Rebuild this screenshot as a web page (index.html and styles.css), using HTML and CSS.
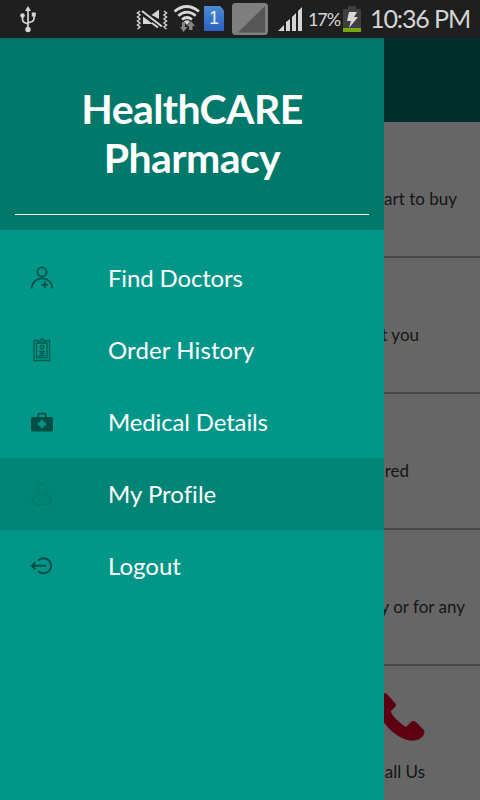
FILE: index.html
```html
<!DOCTYPE html>
<html lang="en">
<head>
<meta charset="utf-8">
<title>HealthCARE Pharmacy</title>
<link rel="stylesheet" href="styles.css">
</head>
<body>
<div class="phone">
  <header class="status">
    <svg class="usb" width="18" height="28" viewBox="0 0 18 28" fill="none" stroke="#d5d5d5" stroke-width="1.7">
      <path d="M9 5v18M3.500 11v3.500q0 2 2 3L9 19M15 10v3.500q0 2-2 3L9 18"/>
      <path d="M9 1l3 5H6zM12.800 7.500h4v4h-4z" fill="#d5d5d5" stroke="none"/>
      <circle cx="3.500" cy="10.500" r="2.300" fill="#d5d5d5" stroke="none"/><circle cx="9" cy="24.500" r="2.700" fill="#d5d5d5" stroke="none"/>
    </svg>
    <svg class="mute" width="32" height="22" viewBox="0 0 32 22" fill="none" stroke="#d5d5d5" stroke-width="1.500">
      <path d="M4 2L1.500 4 4 6 1.500 8 4 10l-2.500 2L4 14l-2.500 2L4 18l-2.500 2M28 2l2.500 2L28 6l2.500 2-2.500 2 2.500 2-2.500 2 2.500 2-2.500 2 2.500 2"/>
      <path d="M15.500 6L23 .5V10zM7 7.500L17 15H7z" fill="#d5d5d5" stroke="none"/>
      <path d="M6 2.500l20 15.500" stroke="#1f1f1f" stroke-width="4.500"/><path d="M6 2l20 15.500M16 14l6 4.500" stroke-width="2"/>
    </svg>
    <svg class="wifi" width="28" height="28" viewBox="0 0 28 28" fill="none" stroke="#d8d8d8" stroke-width="2.700">
      <path d="M1.500 7.500q12.200-10 24.400 0M5.300 11.700q8.700-7 17.400 0M9 15.500q5-4 10 0"/>
      <path d="M11 17.500q3-2.500 6 0l-3 3.500z" fill="#d8d8d8" stroke="none"/>
      <path d="M9 18h3v5h2.500L10.500 28 7 23h2zM16 26v-4h-2l4-5 4 5h-2.500v4z" fill="#858585" stroke="none"/>
    </svg>
    <span class="sim">1</span>
    <svg class="nosim" width="36" height="32" viewBox="0 0 36 32"><rect width="36" height="32" rx="3.500" fill="#7e7e7e"/><path d="M33 3v26.500H6z" fill="#565656"/></svg>
    <svg class="signal" width="25" height="24" viewBox="0 0 25 24" fill="#d5d5d5"><path d="M0 24l6-6v6zM8 24v-9l4-3v12zM14 24V10l4-4v18zM20 24V4l4-4v24z"/></svg>
    <span class="percent">17%</span>
    <svg class="battery" width="18" height="26" viewBox="0 0 18 26"><path d="M5 0h8v3h5v19H0V3h5z" fill="#3f3f3f"/><path d="M0 22h18v4H0z" fill="#77a816"/><path d="M6 6h8l-3 5h4L6 22l2-7H4z" fill="#d8d8d8"/></svg>
    <span class="clock">10:36 PM</span>
  </header>
  <main class="page">
    <div class="appbar"></div>
    <div class="card buy"><span>art to buy</span></div>
    <div class="card meet"><span>t you</span></div>
    <div class="card req"><span>ired</span></div>
    <div class="card any"><span>y or for any</span></div>
    <div class="card call">
      <svg class="phone-icon" width="48" height="48" viewBox="0 0 48 48"><path d="M2 5C4 1 8-1 10 1l8 9q2 2 0 4l-4 4q0 3 5 8t10 8l5-5q3-2 5 0l7 7q3 3 0 7c-5 6-14 6-23 1C10 37-3 20 2 5z" fill="#5c0012"/></svg>
      <span>Call Us</span>
    </div>
    <aside class="drawer">
      <h1 class="title"><span class="t1">HealthCARE</span><span class="t2">Pharmacy</span></h1>
      <nav class="menu">
        <a class="item doctors"><svg width="24" height="24" viewBox="0 0 24 24" fill="none" stroke="#004d45" stroke-width="1.700"><circle cx="12" cy="6" r="4.600"/><path d="M1.700 22.800C1.700 9 22.300 9 22.300 22.800M11.500 18.800h6.500M14.800 15.500v6.500"/></svg><span>Find Doctors</span></a>
        <a class="item orders"><svg width="24" height="24" viewBox="0 0 24 24" fill="none" stroke="#005b51" stroke-width="1.300"><path d="M8 2.500H4v20h15.500v-20H16M8.500 5h-2v14.500h10.500V5h-2M8.500 5V3h2c0-3 3-3 3 0h2v2zM9 13.500h6M10 15.500h4M9 17.500h6"/><circle cx="12" cy="9.300" r="1.800"/></svg><span>Order History</span></a>
        <a class="item medical"><svg width="24" height="24" viewBox="0 0 24 24"><path d="M8.300 8V4.700q0-1 1-1h5.400q1 0 1 1V8" fill="none" stroke="#004d45" stroke-width="1.700"/><rect x="1" y="7" width="22" height="14.500" rx="1.500" fill="#004d45"/><path d="M12 10v8M8 14h8" stroke="#009688" stroke-width="3"/></svg><span>Medical Details</span></a>
        <a class="item profile active"><svg width="24" height="24" viewBox="0 0 24 24" fill="none" stroke="#00786c" stroke-width="1.300"><ellipse cx="11.800" cy="7" rx="4.300" ry="5.600"/><path d="M8.500 12.500l-4 2q-2 1-2 5.500 2 2.800 9.200 2.800t9.300-2.800q0-4.500-2-5.500l-4-2"/></svg><span>My Profile</span></a>
        <a class="item logout"><svg width="24" height="24" viewBox="0 0 24 24" fill="none" stroke="#004d45" stroke-width="2"><path d="M8 6.500A7.600 7.600 0 1 1 8 17M16.500 11.800H2M5.500 8.300L2 11.800l3.500 3.500"/></svg><span>Logout</span></a>
      </nav>
    </aside>
  </main>
</div>
</body>
</html>
```
FILE: styles.css
```css
* { box-sizing: border-box; }
body { margin: 0; font-family: Lato, sans-serif; font-variant-ligatures: none; }
.phone { width: 480px; height: 800px; overflow: hidden; background: #666; }
.status { height: 38px; background: #1f1f1f; color: #d5d5d5; display: flex; align-items: flex-start; padding-left: 19px; white-space: nowrap; }
.status svg, .status span { flex: none; }
.usb { margin-top: 5px; }
.mute { margin: 9px 0 0 99px; }
.wifi { margin: 4px 0 0 5px; }
.sim { width: 20px; height: 25px; margin: 6px 0 0 3px; background: linear-gradient(#4a8cd4, #2b5fc0); clip-path: polygon(0 0, 80% 0, 100% 18%, 100% 100%, 0 100%); font: 18px/25px "Liberation Sans", sans-serif; color: #eee; text-align: center; }
.nosim { margin: 3px 0 0 8px; }
.signal { margin: 7px 0 0 10px; }
.percent { width: 32px; margin: 8px 0 0 5px; font-size: 18px; line-height: 22px; letter-spacing: -1.1px; }
.battery { margin: 6px 0 0 3px; }
.clock { margin: 3px 0 0 9px; font-size: 25px; line-height: 30px; letter-spacing: -1.1px; }
.page { position: relative; height: 762px; }
.appbar { height: 84px; background: #00302b; }
.card { height: 136px; border-bottom: 2px solid #484848; display: flex; flex-direction: column; align-items: flex-end; padding: 66px 23px 0 0; font-size: 17px; line-height: 22px; color: #151515; white-space: nowrap; }
.meet { padding-right: 61px; }
.req { padding-right: 71px; }
.any { padding-right: 15px; }
.call { padding: 27px 55px 0 0; border-bottom: 0; }
.phone-icon { display: block; margin-bottom: 20px; }
.drawer { position: absolute; top: 0; left: 0; width: 384px; height: 762px; background: #009688; color: #fff; }
.title { height: 192px; margin: 0; padding: 46px 15px 0; background: linear-gradient(#006d60, #00796b 4px); font-size: 41px; line-height: 49px; letter-spacing: -.6px; display: flex; flex-direction: column; align-items: center; }
.title::after { content: ""; width: 354px; height: 1px; margin-top: 32px; background: #fff; }
.menu { padding-top: 12px; }
.item { height: 72px; padding-left: 30px; display: flex; align-items: center; gap: 54px; font-size: 24px; white-space: nowrap; }
.item svg { flex: none; }
.item span { padding-bottom: 2px; }
.doctors, .medical { letter-spacing: -.15px; }
.orders { letter-spacing: .1px; }
.active { background: #008476; }
```
